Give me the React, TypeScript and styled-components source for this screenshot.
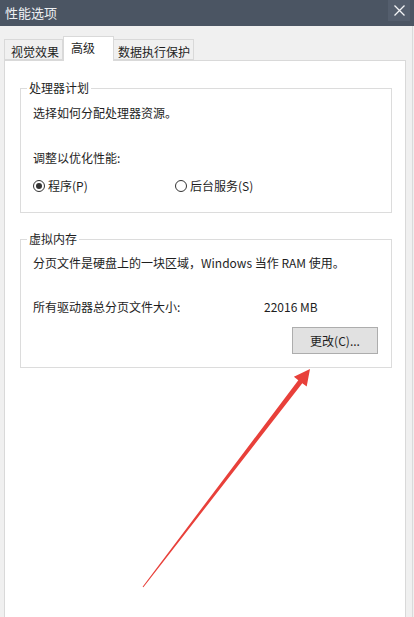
import { createGlobalStyle, styled } from "styled-components";

const GlobalStyle = createGlobalStyle`
    body {
        margin: 0;
        font-family: "Noto Sans CJK SC", "Noto Sans", sans-serif;
        color: #1e1e1e;
    }
`;

const Window = styled.div`
    position: relative;
    width: 414px;
    height: 617px;
    background: #f0f0f0;
    overflow: hidden;
    display: flex;
    flex-direction: column;
`;

const TitleBar = styled.header`
    height: 26px;
    flex: none;
    background: #4b5563;
    display: flex;
    align-items: flex-start;
    justify-content: space-between;
    padding-left: 5px;
`;

const Title = styled.span`
    font-size: 13px;
    color: #eef0f3;
    line-height: 26px;
`;

const Close = styled.div`
    width: 22px;
    height: 21px;
    margin-right: 4px;
    display: flex;
    align-items: center;
    justify-content: center;
    background: #545e6d;
`;

const Body = styled.div`
    flex: 1;
    padding-top: 10px;
    display: flex;
    flex-direction: column;
    border-right: 1px solid #dadada;
    margin-right: 1px;
`;

const Tabs = styled.div`
    display: flex;
    align-items: flex-end;
    height: 24px;
    margin-left: 4px;
    position: relative;
    z-index: 1;
`;

const Tab = styled.div<{ $active?: boolean; $w: number; $pad: number }>`
    box-sizing: border-box;
    width: ${p => p.$w}px;
    height: ${p => (p.$active ? 25 : 21)}px;
    margin-bottom: ${p => (p.$active ? -1 : 0)}px;
    padding-left: ${p => p.$pad}px;
    padding-top: ${p => (p.$active ? 3 : 4)}px;
    font-size: 12px;
    line-height: 16px;
    background: ${p => (p.$active ? "#ffffff" : "#f0f0f0")};
    border: 1px solid #d9d9d9;
    border-bottom: ${p => (p.$active ? "none" : "1px solid #d9d9d9")};
    border-left: ${p => (p.$active ? "1px solid #d9d9d9" : "none")};
    &:first-child {
        border-left: 1px solid #d9d9d9;
    }
`;

const Panel = styled.div`
    flex: 1;
    box-sizing: border-box;
    width: 402px;
    margin-left: 4px;
    background: #ffffff;
    border: 1px solid #d9d9d9;
    border-bottom: none;
    padding: 19px 13px 0 15px;
    display: flex;
    flex-direction: column;
    gap: 18px;
`;

const Group = styled.fieldset`
    margin: 0;
    border: 1px solid #dcdcdc;
    padding: 0 13px 13px 12px;
    min-width: 0;
`;

const Legend = styled.legend`
    font-size: 12px;
    line-height: 16px;
    padding: 0 2px;
    margin-left: -6px;
`;

const Line = styled.div<{ $top: number }>`
    font-size: 12px;
    line-height: 16px;
    margin-top: ${p => p.$top}px;
    white-space: nowrap;
`;

const RadioRow = styled.div`
    display: grid;
    grid-template-columns: 142px 1fr;
    margin-top: 12px;
    margin-bottom: 5px;
`;

const RadioLabel = styled.label`
    display: flex;
    align-items: center;
    gap: 3px;
    font-size: 12px;
    line-height: 16px;
`;

const RadioDot = styled.span<{ $checked?: boolean }>`
    box-sizing: border-box;
    width: 12px;
    height: 12px;
    border-radius: 50%;
    border: 1px solid #333333;
    display: flex;
    align-items: center;
    justify-content: center;
    &::after {
        content: "";
        width: 6px;
        height: 6px;
        border-radius: 50%;
        background: ${p => (p.$checked ? "#333333" : "transparent")};
    }
`;

const SizeRow = styled.div`
    display: grid;
    grid-template-columns: 231px 1fr;
    font-size: 12px;
    line-height: 16px;
    margin-top: 28px;
`;

const ButtonRow = styled.div`
    display: flex;
    justify-content: flex-end;
    margin-top: 12px;
`;

const Button = styled.button`
    box-sizing: border-box;
    width: 86px;
    height: 27px;
    background: #e1e1e1;
    border: 1px solid #adadad;
    font-family: inherit;
    font-size: 12px;
    color: #1e1e1e;
    padding: 0;
`;

const Arrow = styled.svg`
    position: absolute;
    left: 0;
    top: 0;
    pointer-events: none;
`;

function App() {
    return (
        <Window>
            <GlobalStyle />
            <TitleBar>
                <Title>性能选项</Title>
                <Close>
                    <svg width="11" height="11" viewBox="0 0 11 11">
                        <path d="M0.5 0.5 L10.5 10.5 M10.5 0.5 L0.5 10.5" stroke="#f4f5f7" strokeWidth="1.3" />
                    </svg>
                </Close>
            </TitleBar>
            <Body>
                <Tabs>
                    <Tab $w={59} $pad={6}>视觉效果</Tab>
                    <Tab $w={51} $pad={7} $active>高级</Tab>
                    <Tab $w={80} $pad={4}>数据执行保护</Tab>
                </Tabs>
                <Panel>
                    <Group>
                        <Legend>处理器计划</Legend>
                        <Line $top={9}>选择如何分配处理器资源。</Line>
                        <Line $top={29}>调整以优化性能:</Line>
                        <RadioRow>
                            <RadioLabel><RadioDot $checked />程序(P)</RadioLabel>
                            <RadioLabel><RadioDot />后台服务(S)</RadioLabel>
                        </RadioRow>
                    </Group>
                    <Group>
                        <Legend>虚拟内存</Legend>
                        <Line $top={8}>分页文件是硬盘上的一块区域，Windows 当作 RAM 使用。</Line>
                        <SizeRow>
                            <span>所有驱动器总分页文件大小:</span>
                            <span>22016 MB</span>
                        </SizeRow>
                        <ButtonRow>
                            <Button>更改(C)...</Button>
                        </ButtonRow>
                    </Group>
                </Panel>
            </Body>
            <Arrow width="414" height="617" viewBox="0 0 414 617">
                <polygon
                    points="142.6,586.7 298.3,380.2 293.9,376.8 310,369 306.7,386.6 302.3,383.2 143.4,587.3"
                    fill="#e8403a"
                />
            </Arrow>
        </Window>
    );
}

export default App;
